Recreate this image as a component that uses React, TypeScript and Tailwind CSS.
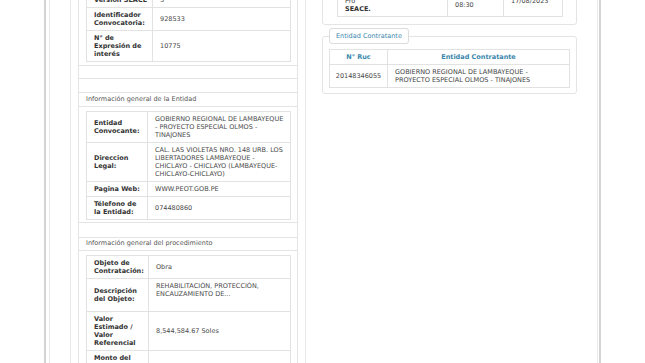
import React from "react";

const font = { fontFamily: '"DejaVu Sans", Verdana, sans-serif' };

type Row = { label: React.ReactNode; value: React.ReactNode };

function InfoTable({ rows, labelW }: { rows: Row[]; labelW: string }) {
  return (
    <table className="w-full table-fixed border-collapse text-[6.5px] leading-[8px]">
      <colgroup>
        <col className={labelW} />
        <col />
      </colgroup>
      <tbody>
        {rows.map((r, i) => (
          <tr key={i}>
            <td className="border border-[#e2e2e2] pl-[7px] pr-[2px] py-[3px] font-bold text-[#333] align-middle whitespace-nowrap">
              {r.label}
            </td>
            <td className="border border-[#e2e2e2] pl-[7px] pr-[2px] py-[3px] text-[#4a4a4a] align-middle whitespace-nowrap">
              {r.value}
            </td>
          </tr>
        ))}
      </tbody>
    </table>
  );
}

export default function App() {
  const t1: Row[] = [
    { label: "Version SEACE", value: "3" },
    { label: <>Identificador<br />Convocatoria:</>, value: "928533" },
    { label: <>N° de<br />Expresión de<br />interés</>, value: "10775" },
  ];
  const t2: Row[] = [
    {
      label: <>Entidad<br />Convocante:</>,
      value: <>GOBIERNO REGIONAL DE LAMBAYEQUE<br />- PROYECTO ESPECIAL OLMOS -<br />TINAJONES</>,
    },
    {
      label: <>Direccion<br />Legal:</>,
      value: (
        <>
          CAL. LAS VIOLETAS NRO. 148 URB. LOS<br />LIBERTADORES LAMBAYEQUE -<br />CHICLAYO - CHICLAYO (LAMBAYEQUE-<br />CHICLAYO-CHICLAYO)
        </>
      ),
    },
    { label: "Pagina Web:", value: "WWW.PEOT.GOB.PE" },
    { label: <>Télefono de<br />la Entidad:</>, value: "074480860" },
  ];
  const t3: Row[] = [
    { label: <>Objeto de<br />Contratación:</>, value: "Obra" },
    {
      label: <>Descripción<br />del Objeto:</>,
      value: (
        <>
          REHABILITACIÓN, PROTECCIÓN,<br />ENCAUZAMIENTO DE...
          <div className="h-[10px]" />
        </>
      ),
    },
    { label: <>Valor<br />Estimado /<br />Valor<br />Referencial</>, value: "8,544,584.67 Soles" },
    { label: <>Monto del<br />Derecho de<br />Participación</>, value: "GRATUITO" },
  ];

  return (
    <div className="w-[645px] h-[363px] overflow-hidden bg-white" style={font}>
      <div className="ml-[44px] w-[557px] h-[363px] border-x-2 border-[#d4d4d4]">
        <div className="ml-[3px] mr-[1px] h-full border-x border-[#ebebeb] flex pl-[20px]">
          {/* Left column */}
          <div className="w-[236px] h-full border-x border-[#ebebeb] px-[7px]">
            <div className="border-x border-[#e4e4e4] -mt-[8px]">
              <div className="pl-[7px] pr-[6px] pb-[3px] border-b border-[#e4e4e4]">
                <InfoTable rows={t1} labelW="w-[66px]" />
              </div>
              <div className="h-[13px] border-b border-[#e4e4e4]" />
              <div className="h-[14px] border-b border-[#e4e4e4]" />
              <div className="h-[14px] border-b border-[#e4e4e4] pl-[7px] flex items-center text-[6.5px] text-[#555]">
                Información general de la Entidad
              </div>
              <div className="pl-[7px] pr-[6px] pt-[4px] pb-[2px] border-b border-[#e4e4e4]">
                <InfoTable rows={t2} labelW="w-[61px]" />
              </div>
              <div className="h-[15px] border-b border-[#e4e4e4]" />
              <div className="h-[13px] border-b border-[#e4e4e4] pl-[7px] flex items-center text-[6.5px] text-[#555]">
                Información general del procedimiento
              </div>
              <div className="pl-[7px] pr-[6px] pt-[4px]">
                <InfoTable rows={t3} labelW="w-[62px]" />
              </div>
            </div>
          </div>

          {/* Right column */}
          <div className="flex-1 pl-[16px] pr-[20px]">
            <div className="-mt-[21px] border border-[#e4e4e4] rounded-[3px] pl-[14px] pr-[13px] pt-[5px] pb-[7px]">
              <table className="w-full table-fixed border-collapse text-[6.5px] leading-[8px] text-[#444]">
                <colgroup>
                  <col className="w-[110px]" />
                  <col className="w-[56px]" />
                  <col />
                </colgroup>
                <tbody>
                  <tr>
                    <td className="border border-[#e2e2e2] pl-[7px] py-[3px] align-middle whitespace-nowrap">
                      Registrado en<br />Pro<br /><span className="font-bold text-[#333]">SEACE.</span>
                    </td>
                    <td className="border border-[#e2e2e2] pl-[7px] py-[3px] align-middle whitespace-nowrap">
                      17/08/2023<br />08:30
                    </td>
                    <td className="border border-[#e2e2e2] pl-[7px] py-[3px] align-middle whitespace-nowrap">
                      17/08/2023
                    </td>
                  </tr>
                </tbody>
              </table>
            </div>

            <fieldset className="mt-[3px] border border-[#e4e4e4] rounded-[3px] px-[6px] pb-[5px]">
              <legend className="border border-[#dcdcdc] rounded-[3px] px-[6px] h-[16px] leading-[14px] text-[6.5px] text-[#3a87ad]">
                Entidad Contratante
              </legend>
              <table className="mt-[5px] w-full table-fixed border-collapse text-[6.5px] leading-[8px]">
                <colgroup>
                  <col className="w-[58px]" />
                  <col />
                </colgroup>
                <thead>
                  <tr>
                    <th className="border border-[#e2e2e2] py-[3px] font-bold text-[#3a87ad] text-center">N° Ruc</th>
                    <th className="border border-[#e2e2e2] py-[3px] font-bold text-[#3a87ad] text-center">Entidad Contratante</th>
                  </tr>
                </thead>
                <tbody>
                  <tr>
                    <td className="border border-[#e2e2e2] py-[3px] text-center text-[#444]">20148346055</td>
                    <td className="border border-[#e2e2e2] pl-[7px] py-[3px] text-[#444] whitespace-nowrap">
                      GOBIERNO REGIONAL DE LAMBAYEQUE -<br />PROYECTO ESPECIAL OLMOS - TINAJONES
                    </td>
                  </tr>
                </tbody>
              </table>
            </fieldset>
          </div>
        </div>
      </div>
    </div>
  );
}
